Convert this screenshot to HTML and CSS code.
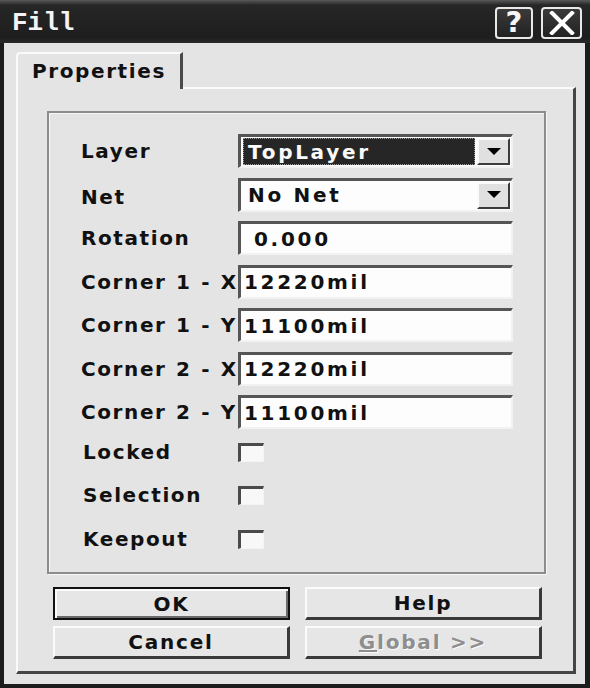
FILE: index.html
```html
<!DOCTYPE html>
<html lang="en">
<head>
  <meta charset="UTF-8" />
  <title>Fill</title>
  <link rel="stylesheet" href="styles.css">
</head>
<body>
  <div class="dialog">
    <div class="titlebar">
      <span class="title">Fill</span>
      <div class="title-buttons">
        <span class="tbtn tbtn-help">?</span>
        <span class="tbtn">
          <svg width="26" height="24" viewBox="0 0 26 24">
            <path d="M3 2 L23 22 M23 2 L3 22" stroke="#fff" stroke-width="4" stroke-linecap="square" />
          </svg>
        </span>
      </div>
    </div>

    <div class="client">
      <div class="tab">Properties</div>
      <div class="panel">
        <div class="group">
          <div class="form">
            <span class="label">Layer</span>
            <div class="combo">
              <span class="combo-value selected">TopLayer</span>
              <span class="drop"><svg width="14" height="8" viewBox="0 0 14 8"><path d="M0 0 H14 L7 7 Z" fill="#000" /></svg></span>
            </div>

            <span class="label label-low">Net</span>
            <div class="combo">
              <span class="combo-value">No Net</span>
              <span class="drop"><svg width="14" height="8" viewBox="0 0 14 8"><path d="M0 0 H14 L7 7 Z" fill="#000" /></svg></span>
            </div>

            <span class="label">Rotation</span>
            <div class="field field-num">0.000</div>

            <span class="label">Corner 1 - X</span>
            <div class="field">12220mil</div>

            <span class="label">Corner 1 - Y</span>
            <div class="field">11100mil</div>

            <span class="label">Corner 2 - X</span>
            <div class="field">12220mil</div>

            <span class="label">Corner 2 - Y</span>
            <div class="field">11100mil</div>

            <span class="label check-label">Locked</span>
            <span class="checkbox"></span>

            <span class="label check-label">Selection</span>
            <span class="checkbox"></span>

            <span class="label check-label">Keepout</span>
            <span class="checkbox"></span>
          </div>
        </div>

        <div class="buttons">
          <button class="btn btn-default">OK</button>
          <button class="btn">Help</button>
          <button class="btn">Cancel</button>
          <button class="btn btn-disabled"><u>G</u>lobal &gt;&gt;</button>
        </div>
      </div>
    </div>
  </div>
</body>
</html>
```

FILE: styles.css
```css
body {
  margin: 0;
  background: #1c1c1c;
  font-family: "DejaVu Sans", "Liberation Sans", sans-serif;
  font-weight: bold;
  font-size: 20px;
  color: #111;
}
.dialog {
  width: 590px;
  height: 688px;
  box-sizing: border-box;
  background: #e4e4e4;
  border-left: 4px solid #1c1c1c;
  border-right: 5px solid #1c1c1c;
  border-bottom: 4px solid #1c1c1c;
}
.titlebar {
  height: 43px;
  margin: 0 -5px 0 -4px;
  padding: 0 8px 0 12px;
  display: flex;
  align-items: center;
  justify-content: space-between;
  background: linear-gradient(#5a5a5a 0, #262626 5px, #1e1e1e 38px, #2a2a2a 43px);
}
.title {
  font-family: "Liberation Mono", "DejaVu Sans Mono", monospace;
  font-size: 26px;
  font-weight: bold;
  color: #f4f4f4;
  margin-top: 3px;
}
.title-buttons {
  display: flex;
  gap: 8px;
  margin-top: 2px;
}
.tbtn {
  width: 37px;
  height: 28px;
  border: 2px solid #e8e8e8;
  border-radius: 4px;
  background: linear-gradient(#3a3a3a, #222);
  color: #f6f6f6;
  display: flex;
  align-items: center;
  justify-content: center;
  font-size: 29px;
  font-weight: bold;
  line-height: 1;
}
.tbtn-help {
  width: 34px;
}
.client {
  height: 641px;
  box-sizing: border-box;
  padding: 9px 9px 0 12px;
  display: flex;
  flex-direction: column;
}
.tab {
  position: relative;
  z-index: 1;
  width: 167px;
  height: 37px;
  margin-bottom: -2px;
  box-sizing: border-box;
  padding: 5px 0 0 14px;
  background: #e4e4e4;
  border-top: 2px solid #fafafa;
  border-left: 2px solid #fafafa;
  border-right: 3px solid #4a4a4a;
  border-top-left-radius: 4px;
  letter-spacing: 1.6px;
}
.panel {
  height: 587px;
  box-sizing: border-box;
  border-top: 2px solid #fafafa;
  border-left: 2px solid #fafafa;
  border-right: 3px solid #454545;
  border-bottom: 3px solid #454545;
  padding: 22px 0 0 29px;
}
.group {
  width: 499px;
  height: 463px;
  box-sizing: border-box;
  border: 2px solid #8c8c8c;
  box-shadow: inset 1px 1px 0 #f6f6f6, 1px 1px 0 #f6f6f6;
  padding: 21px 0 0 32px;
}
.form {
  display: grid;
  grid-template-columns: 157px 275px;
  grid-auto-rows: 34px;
  row-gap: 9.5px;
}
.label {
  display: flex;
  align-items: center;
  letter-spacing: 1.6px;
  word-spacing: 1px;
  white-space: nowrap;
}
.label-low {
  padding-top: 5px;
}
.check-label {
  align-items: flex-start;
  padding-left: 2px;
  line-height: 27px;
}
.combo, .field {
  box-sizing: border-box;
  border-top: 3px solid #555;
  border-left: 3px solid #555;
  border-right: 2px solid #f2f2f2;
  border-bottom: 2px solid #f2f2f2;
  background: #fdfdfd;
  letter-spacing: 2.7px;
}
.combo {
  display: flex;
  align-items: stretch;
  padding: 1px 1px 1px 2px;
}
.combo-value {
  flex: 1;
  display: flex;
  align-items: center;
  padding-left: 5px;
  margin-right: 2px;
}
.combo-value.selected {
  background: #262626;
  color: #fafafa;
  outline: 1px dotted #9a9a9a;
  outline-offset: -1px;
}
.drop {
  width: 33px;
  box-sizing: border-box;
  background: #e0e0e0;
  border-top: 2px solid #fbfbfb;
  border-left: 2px solid #fbfbfb;
  border-right: 2px solid #3c3c3c;
  border-bottom: 2px solid #3c3c3c;
  display: flex;
  align-items: center;
  justify-content: center;
}
.field {
  display: flex;
  align-items: center;
  padding-left: 3px;
}
.field-num {
  padding-left: 13px;
}
.checkbox {
  width: 26px;
  height: 19px;
  margin-top: 4px;
  box-sizing: border-box;
  border-top: 3px solid #4a4a4a;
  border-left: 3px solid #4a4a4a;
  border-right: 1px solid #f4f4f4;
  border-bottom: 1px solid #f4f4f4;
  background: #f8f8f8;
}
.buttons {
  display: grid;
  grid-template-columns: 237px 237px;
  column-gap: 15px;
  row-gap: 6px;
  margin: 13px 0 0 6px;
}
button {
  height: 33px;
  box-sizing: border-box;
  font-family: inherit;
  font-size: 20px;
  font-weight: bold;
  letter-spacing: 1.8px;
  color: #111;
  background: #e6e6e6;
  border-top: 2px solid #fbfbfb;
  border-left: 2px solid #fbfbfb;
  border-right: 3px solid #3a3a3a;
  border-bottom: 3px solid #3a3a3a;
  padding: 0;
}
.btn-default {
  border: 2px solid #111;
  box-shadow: inset 2px 2px 0 #fbfbfb, inset -2px -2px 0 #6a6a6a;
}
.btn-disabled {
  color: #8e8e8e;
  text-shadow: 1px 1px 0 #fafafa;
}
```
